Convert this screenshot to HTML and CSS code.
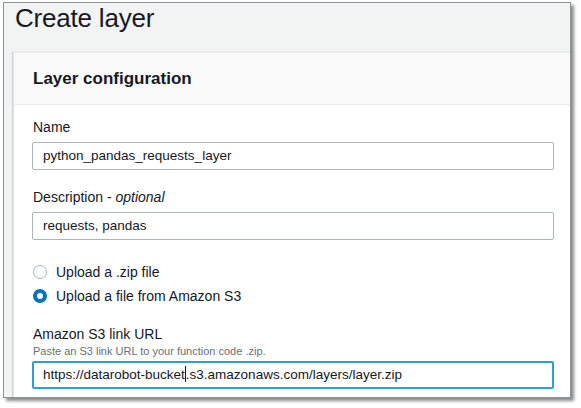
FILE: index.html
```html
<!DOCTYPE html>
<html>
<head>
<meta charset="utf-8">
<link rel="stylesheet" href="styles.css">
</head>
<body>
<div class="frame">
  <h1 class="title">Create layer</h1>
  <div class="card">
    <div class="card-header">Layer configuration</div>
    <div class="card-body">
      <div class="field">
        <div class="label">Name</div>
        <div class="input">python_pandas_requests_layer</div>
      </div>
      <div class="field">
        <div class="label">Description - <i>optional</i></div>
        <div class="input">requests, pandas</div>
      </div>
      <div class="radios">
        <div class="radio-row"><span class="radio"></span><span>Upload a .zip file</span></div>
        <div class="radio-row"><span class="radio checked"></span><span>Upload a file from Amazon S3</span></div>
      </div>
      <div class="field s3">
        <div class="label">Amazon S3 link URL</div>
        <div class="hint">Paste an S3 link URL to your function code .zip.</div>
        <div class="input focused">https://datarobot-bucket<span class="caret"></span>.s3.amazonaws.com/layers/layer.zip</div>
      </div>
    </div>
  </div>
</div>
</body>
</html>
```

FILE: styles.css
```css
html, body {
  margin: 0;
  padding: 0;
  background: #ffffff;
}
body {
  font-family: "Liberation Sans", Arial, sans-serif;
  color: #16191f;
  width: 581px;
  height: 408px;
  overflow: hidden;
}
.frame {
  margin: 2px 0 0 3px;
  width: 568px;
  height: 396px;
  border: 1px solid #8d9296;
  background: #f2f3f3;
  box-shadow: 3px 3px 3px rgba(0, 0, 0, 0.45);
  overflow: hidden;
  box-sizing: border-box;
}
.title {
  margin: 0;
  padding: 0 0 0 11px;
  font-weight: normal;
  font-size: 26px;
  line-height: 30px;
  height: 49px;
  color: #16191f;
  letter-spacing: -0.2px;
}
.card {
  margin-left: 9px;
  width: 600px;
  height: 400px;
  background: #ffffff;
  border-left: 1px solid #e1e4e4;
  border-top: 1px solid #eaeded;
  box-shadow: -1px 0 1px rgba(0, 22, 44, 0.12);
}
.card-header {
  height: 52px;
  box-sizing: border-box;
  background: #fafafa;
  border-bottom: 1px solid #eaeded;
  padding: 16px 0 0 19px;
  font-weight: bold;
  font-size: 17px;
  line-height: 20px;
}
.card-body {
  padding: 13px 0 0 18px;
  display: flex;
  flex-direction: column;
}
.field {
  display: flex;
  flex-direction: column;
}
.label {
  font-size: 14px;
  line-height: 18px;
  padding-left: 1px;
  margin-bottom: 6px;
}
.label i {
  font-style: italic;
}
.input {
  width: 522px;
  height: 28px;
  box-sizing: border-box;
  border: 1px solid #aab7b8;
  border-radius: 2px;
  background: #fff;
  font-size: 13.5px;
  line-height: 26px;
  padding-left: 10px;
  margin-bottom: 18px;
  white-space: nowrap;
}
.radios {
  display: flex;
  flex-direction: column;
  gap: 8px;
  margin-top: 6px;
  padding-left: 1px;
}
.radio-row {
  display: flex;
  align-items: center;
  gap: 9px;
  font-size: 14px;
  line-height: 16px;
}
.radio {
  width: 14px;
  height: 14px;
  box-sizing: border-box;
  border-radius: 50%;
  border: 1px solid #aab7b8;
  background: #fff;
}
.radio.checked {
  border: 4px solid #0073bb;
}
.s3 {
  margin-top: 21px;
}
.s3 .label {
  margin-bottom: 1px;
}
.hint {
  font-size: 11px;
  line-height: 14px;
  color: #687078;
  padding-left: 1px;
  margin-bottom: 3px;
}
.input.focused {
  border: 2px solid #2e9fd1;
  line-height: 24px;
  padding-left: 9px;
}
.caret {
  display: inline-block;
  width: 1px;
  height: 16px;
  background: #16191f;
  vertical-align: -3px;
}
```
